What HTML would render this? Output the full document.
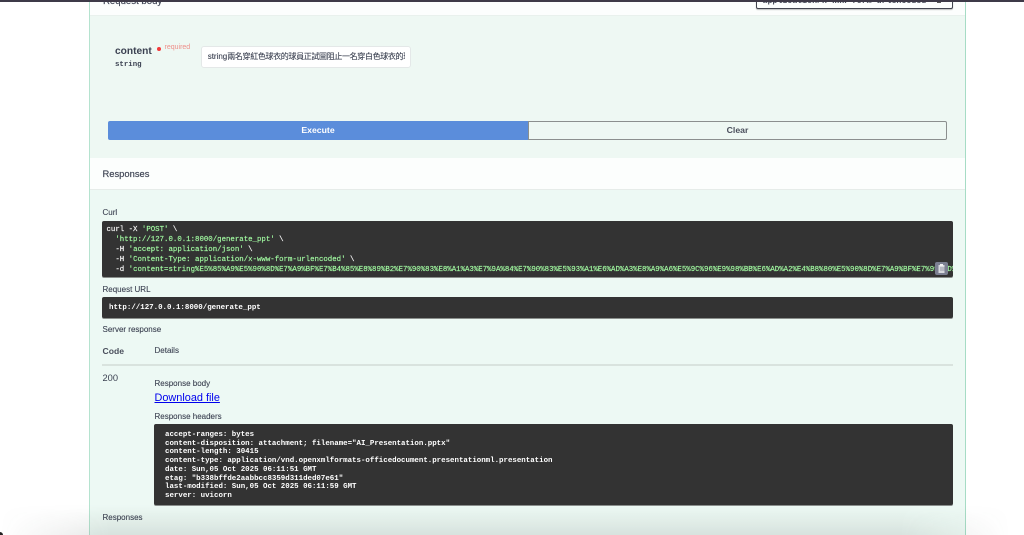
<!DOCTYPE html>
<html><head><meta charset="utf-8"><style>
html,body{margin:0;padding:0;background:#fff}
#p{position:relative;width:1024px;height:535px;overflow:hidden;background:#fff;font-family:"Liberation Sans","Noto Sans CJK TC",sans-serif;color:#3b4151}
#p div,#p a{position:absolute;white-space:pre}
.l{font-size:8px;line-height:10px;height:10px;color:#3b4151;-webkit-text-stroke:.1px #3b4151}
.b{background:#333;border-radius:2px;left:102px;width:851px;box-shadow:0 1px 0 #8a8f8c}
.m{font-family:"Liberation Mono",monospace;font-weight:bold}
.c{font-family:"Liberation Mono",monospace;font-size:7.38px;line-height:10px;height:10px;color:#fff;-webkit-text-stroke:.15px}
.c span{color:#a2fca2}
.h{font-family:"Liberation Mono",monospace;font-weight:bold;font-size:7.43px;line-height:8.7px;color:#fff}
</style></head><body><div id="p">
<div style="left:90px;top:0;width:875px;height:15px;background:#fcfefd"></div>
<div style="left:90px;top:15px;width:875px;height:143px;background:#eef8f3"></div>
<div style="left:90px;top:158px;width:875px;height:31px;background:#fcfefd"></div>
<div style="left:90px;top:189px;width:875px;height:1px;background:#e6ece9"></div>
<div style="left:90px;top:190px;width:875px;height:345px;background:#edf9f4"></div>
<div style="left:90px;top:15px;width:875px;height:1px;background:#e9f1ed"></div>
<div style="left:89px;top:0;width:1px;height:535px;background:#b5e3cf"></div>
<div style="left:965px;top:0;width:1px;height:535px;background:#a6dcc5"></div>

<div style="left:103px;top:-4px;font-size:9.6px;line-height:11px;-webkit-text-stroke:.15px #3b4151">Request body</div>
<div style="left:756px;top:-10px;width:195px;height:17px;background:#fcfefd;border:1px solid #41444e;border-radius:2px;box-shadow:0 1px 1px rgba(0,0,0,.25)"></div>
<div class="m" style="left:762.5px;top:-3px;font-size:8.28px;line-height:10px;color:#4a4f5c">application/x-www-form-urlencoded</div>
<div style="left:937px;top:1px;width:4px;height:1.5px;background:#555"></div>
<div style="left:0;top:0;width:1024px;height:1.5px;background:#3e3a48"></div>

<div style="left:115px;top:45.5px;font-size:10.2px;line-height:12px;font-weight:bold;color:#3b4151">content</div>
<div style="left:157px;top:46.5px;width:4px;height:4px;background:#f23a3a;border-radius:50%"></div>
<div style="left:164.5px;top:44px;font-size:7px;line-height:8px;color:#ee8f8a">required</div>
<div class="m" style="left:115px;top:59.5px;font-size:7.4px;line-height:10px;color:#3b4151">string</div>
<div style="left:201px;top:46px;width:208px;height:20px;background:#fff;border:1px solid #e4e8e8;border-radius:3px"></div>
<div style="left:207.7px;top:47px;width:197.5px;height:20px;line-height:20px;font-size:8px;overflow:hidden;color:#3b4151;-webkit-text-stroke:.1px #3b4151">string<span style="letter-spacing:-.35px">兩名穿紅色球衣的球員正試圖阻止一名穿白色球衣的球</span></div>

<div style="left:108px;top:121px;width:420px;height:19px;background:#5b8ddb;border-radius:2px 0 0 2px;color:#fff;font-size:8.7px;font-weight:bold;line-height:19.5px;text-align:center">Execute</div>
<div style="left:528px;top:121px;width:417px;height:17px;border:1px solid #8b8f8e;border-radius:0 2px 2px 0;color:#4a4f5c;font-size:8.7px;font-weight:bold;line-height:17.5px;text-align:center">Clear</div>

<div style="left:102.5px;top:167.5px;font-size:9.4px;line-height:11px;-webkit-text-stroke:.15px #3b4151">Responses</div>

<div class="l" style="left:102.5px;top:208px">Curl</div>
<div class="b" style="top:221px;height:56px"></div>
<div class="c" style="left:106.5px;top:225px">curl -X <span>'POST'</span> \</div>
<div class="c" style="left:106.5px;top:235px">  <span>'http://127.0.0.1:8000/generate_ppt'</span> \</div>
<div class="c" style="left:106.5px;top:245px">  -H <span>'accept: application/json'</span> \</div>
<div class="c" style="left:106.5px;top:255px">  -H <span>'Content-Type: application/x-www-form-urlencoded'</span> \</div>
<div class="c" style="left:106.5px;top:265px;width:846.5px;overflow:hidden">  -d <span>'content=string%E5%85%A9%E5%90%8D%E7%A9%BF%E7%B4%85%E8%89%B2%E7%90%83%E8%A1%A3%E7%9A%84%E7%90%83%E5%93%A1%E6%AD%A3%E8%A9%A6%E5%9C%96%E9%98%BB%E6%AD%A2%E4%B8%80%E5%90%8D%E7%A9%BF%E7%99%BD%E8%89%B2</span></div>
<div style="left:935px;top:262px;width:12.5px;height:13px;background:#7c8092;border-radius:2px"></div>
<svg style="position:absolute;left:937px;top:263px" width="9" height="11" viewBox="0 0 9 11"><path d="M1.5 2h6v8h-6z" fill="#d8dade"/><path d="M3 1h3v2H3z" fill="#f2f2f4"/><path d="M3 5h5M3 7h5" stroke="#7c8092" stroke-width=".8"/></svg>

<div class="l" style="left:102.5px;top:284.5px">Request URL</div>
<div class="b" style="top:297px;height:21px"></div>
<div class="m" style="left:109px;top:303px;font-size:7.45px;line-height:10px;color:#fff">http://127.0.0.1:8000/generate_ppt</div>
<div class="l" style="left:102.5px;top:324.5px">Server response</div>

<div style="left:102.5px;top:345.5px;font-size:8.6px;line-height:11px;font-weight:bold;color:#4a4f5c">Code</div>
<div class="l" style="left:154.5px;top:346px">Details</div>
<div style="left:102px;top:364px;width:851px;height:1.5px;background:#d9e3de"></div>
<div style="left:102.5px;top:372.5px;font-size:9.3px;line-height:11px">200</div>
<div class="l" style="left:154.5px;top:378.5px">Response body</div>
<a style="left:154.5px;top:391px;font-size:10.9px;line-height:14px;color:#0000ee;text-decoration:underline">Download file</a>
<div class="l" style="left:154.5px;top:411.5px">Response headers</div>
<div class="b" style="left:154px;width:799px;top:424px;height:81px"></div>
<div class="h" style="left:165px;top:431px">accept-ranges: bytes
content-disposition: attachment; filename="AI_Presentation.pptx"
content-length: 30415
content-type: application/vnd.openxmlformats-officedocument.presentationml.presentation
date: Sun,05 Oct 2025 06:11:51 GMT
etag: "b338bffde2aabbcc8359d311ded07e61"
last-modified: Sun,05 Oct 2025 06:11:59 GMT
server: uvicorn</div>
<div class="l" style="left:102.5px;top:512.5px">Responses</div>

<div style="left:0;top:505px;width:1024px;height:30px;background:linear-gradient(to bottom,rgba(0,0,0,0),rgba(60,70,65,.12));-webkit-mask-image:linear-gradient(to right,transparent 0,#000 110px,#000 900px,transparent 1010px)"></div>
<div style="left:0;top:532px;width:3px;height:3px;background:#222;border-radius:0 3px 0 0"></div>
</div></body></html>
